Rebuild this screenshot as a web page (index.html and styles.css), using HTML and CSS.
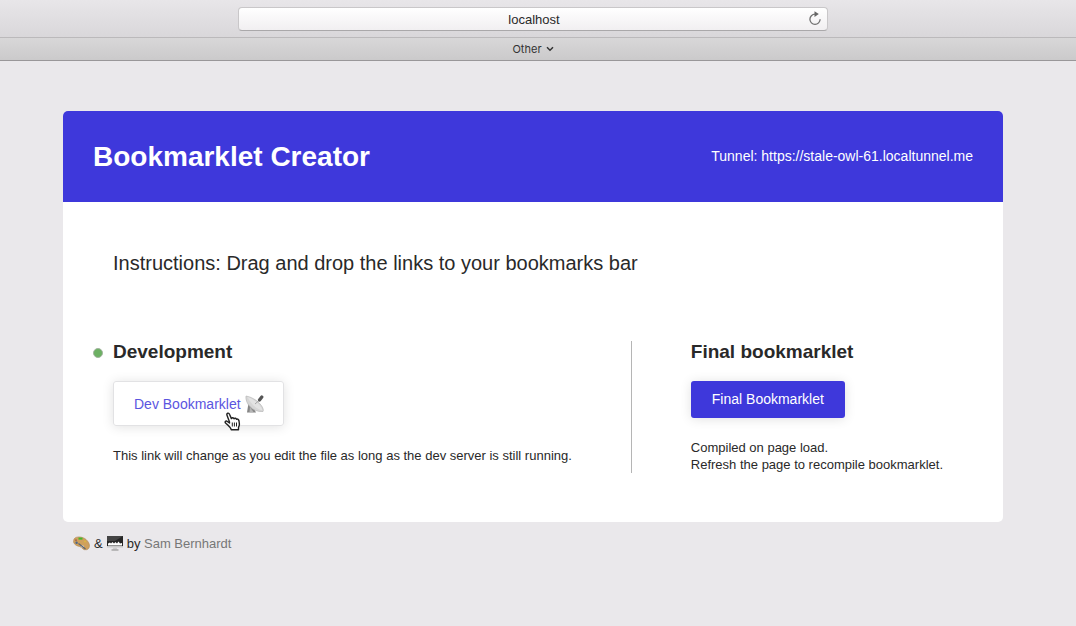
FILE: index.html
```html
<!DOCTYPE html>
<html lang="en">
<head>
<meta charset="utf-8">
<meta name="viewport" content="width=device-width, initial-scale=1">
<title>Bookmarklet Creator</title>
<link rel="stylesheet" href="styles.css">
</head>
<body>
<div class="toolbar">
  <div class="address">
    <input class="address-input" type="text" value="localhost" aria-label="Address">
    <button class="reload" type="button" aria-label="Reload">
      <svg width="14" height="16" viewBox="0 0 14 16" aria-hidden="true"><path d="M7 3.2A5.1 5.1 0 1 0 12.1 8.3" fill="none" stroke="#707070" stroke-width="1.3"/><path d="M6.5 .3 10.8 3.1 6.5 6z" fill="#666"/></svg>
    </button>
  </div>
</div>
<div class="favorites">
  <button class="folder" type="button">Other
    <svg width="8" height="6" viewBox="0 0 8 6" aria-hidden="true"><path d="M1 1.2 4 4.2 7 1.2" fill="none" stroke="#333" stroke-width="1.5"/></svg>
  </button>
</div>
<div class="page">
  <main class="card">
    <header class="banner">
      <h1 class="title">Bookmarklet Creator</h1>
      <p class="tunnel">Tunnel: https://stale-owl-61.localtunnel.me</p>
    </header>
    <div class="content">
      <p class="instructions">Instructions: Drag and drop the links to your bookmarks bar</p>
      <div class="columns">
        <section class="column column-dev">
          <h2 class="heading"><span class="status"></span>Development</h2>
          <a class="button button-dev" href="#dev">Dev Bookmarklet
            <svg class="dish" width="20" height="19" viewBox="0 0 20 19" aria-hidden="true"><path d="M3.5 8 2 17.5H11L8 12z" fill="#858585"/><path d="M5 12 4.5 17 8.5 17z" fill="#b5b5b5"/><path d="M1 1C0 8 7 17.3 18 16.5 20 13 12 3 1 1z" fill="#d6d6d6" stroke="#b8b8b8" stroke-width=".7"/><path d="M2.5 2C8 3.5 16 10 17.5 15.5 11 14 6 9 2.5 2z" fill="#e3e3e3"/><path d="M10 9 14 5.5" fill="none" stroke="#999" stroke-width=".8"/><path d="M14.5 5 16.8 2" stroke="#555" stroke-width="3.2" stroke-linecap="round"/></svg>
            <svg class="cursor" width="17" height="19" viewBox="0 0 17 19" aria-hidden="true"><path d="M5.5 10 3 3.2C2.3 1.2 4.7 .3 5.5 2.3L7.4 6.6C8 5.4 9.6 5.6 10 6.8 10.9 5.8 12.1 6.2 12.5 7.3 13.7 6.6 14.7 7.5 15 9L15.4 12.1C15.5 13.6 14.9 14.5 14.5 15.5V17.7H7.2C6.6 15.2 3.9 13.3 1.6 11 .6 10 1.6 8.6 3 9.2L5.5 11z" fill="#fff" stroke="#222" stroke-width="1.4" stroke-linejoin="round"/><path d="M8.3 10.5V14.5M10.4 10.5V14.5M12.5 10.5V14.5" stroke="#222"/></svg>
          </a>
          <p class="note">This link will change as you edit the file as long as the dev server is still running.</p>
        </section>
        <section class="column column-final">
          <h2 class="heading">Final bookmarklet</h2>
          <a class="button button-final" href="#final">Final Bookmarklet</a>
          <p class="note">Compiled on page load.<br>Refresh the page to recompile bookmarklet.</p>
        </section>
      </div>
    </div>
  </main>
  <footer class="credits">
    <svg width="17" height="15" viewBox="0 0 17 15" role="img" aria-label="Design"><path d="M1 3C3-.2 11 .2 14.5 5 17.5 8.5 17 13 13.5 13.7 10 14.6 9 11 6.5 10.5 4 10 .8 8.5.5 5.7z" fill="#cfa05c" stroke="#ad8450" stroke-width=".6"/><ellipse cx="9.4" cy="10.4" rx="1.6" ry="1" fill="#ebe9eb"/><circle cx="3" cy="4.2" r="1" fill="#a8674c"/><path d="M5.5 2.6H9.5" stroke="#42b82e" stroke-width="2"/><circle cx="12" cy="5.5" r="1" fill="#dcb840"/><circle cx="3.6" cy="6.8" r="1.2" fill="#4a668b"/><path d="M5.5 7.5 12.5 13" stroke="#5d6674" stroke-width="1.3"/></svg>
    <span>&amp;</span>
    <svg width="16" height="15" viewBox="0 0 16 15" role="img" aria-label="Code"><path d="M0 0H16V10H0z" fill="#262626"/><path d="M0 0H16L8 5H0z" fill="#444"/><path d="M1 7.5 3 6.5 4 7.5 5.5 6 7 7.5 8.5 6 10 7.5 11.5 5.5 13 7.5 15 7V9.5H1z" fill="#fff"/><path d="M0 10H16V11.5H0z" fill="#c9c9c9"/><path d="M6.5 11.5H9.5L10.5 13.5H5.5z" fill="#ccc"/><path d="M4.5 14H11.5" stroke="#888"/></svg>
    <span>by <a class="author" href="#author">Sam Bernhardt</a></span>
  </footer>
</div>
</body>
</html>
```
FILE: styles.css
```css
* { box-sizing: border-box; }

body {
  margin: 0;
  min-height: 100vh;
  background: #eae8eb;
  color: #292929;
  font-family: "Liberation Sans", Arial, sans-serif;
  font-size: 13px;
  line-height: 17px;
}

h1, h2, p { margin: 0; }
svg { flex: none; }
button { border: 0; background: none; padding: 0; font: inherit; color: inherit; }
a { color: inherit; text-decoration: none; }

.toolbar {
  display: flex;
  justify-content: center;
  padding: 7px 10px 6px 0;
  background: linear-gradient(#e8e6e9, #d9d7da);
  border-bottom: 1px solid #bbb9bb;
}

.address {
  display: flex;
  align-items: center;
  width: 590px;
  max-width: 90%;
  height: 24px;
  padding: 0 5px 0 21px;
  background: linear-gradient(#fff, #f1eff1);
  border: 1px solid #c9c7c9;
  border-bottom-color: #aaa8aa;
  border-radius: 4px;
}

.address-input {
  flex: 1;
  min-width: 0;
  border: 0;
  padding: 0;
  background: none;
  text-align: center;
  font: 13px "Liberation Sans", Arial, sans-serif;
  color: #292929;
}

.reload { display: flex; width: 14px; }

.favorites {
  display: flex;
  justify-content: center;
  padding: 3px 10px 3px 0;
  background: linear-gradient(#d8d7d8, #cbcacb);
  border-bottom: 1px solid #999799;
}

.folder {
  display: flex;
  align-items: center;
  gap: 4px;
  font-family: Inter, sans-serif;
  font-size: 11px;
  line-height: 16px;
  color: #333;
}

.page {
  width: 100%;
  max-width: 1066px;
  padding: 50px 63px;
}

.card {
  background: #fff;
  border-radius: 5px;
  overflow: hidden;
}

.banner {
  display: flex;
  align-items: center;
  justify-content: space-between;
  gap: 20px;
  padding: 30px;
  background: #3e38db;
  color: #fff;
}

.title { font-size: 28px; line-height: 31px; }
.tunnel { font-size: 14px; }

.content { padding: 50px; }
.instructions { font-size: 20px; line-height: 23px; }

.columns {
  display: flex;
  margin-top: 66px;
}

.column {
  display: flex;
  flex-direction: column;
  align-items: flex-start;
}

.column-dev { flex: 1; padding-right: 20px; }
.column-final { padding: 0 10px 0 59px; border-left: 1px solid #b5b5b5; }

.heading {
  position: relative;
  margin-bottom: 19px;
  font-size: 19px;
  line-height: 21px;
}

.status {
  position: absolute;
  top: 7px;
  left: -20px;
  width: 10px;
  height: 10px;
  border: 1px solid #a3b5a0;
  border-radius: 50%;
  background: #6cb063;
}

.button {
  position: relative;
  display: flex;
  align-items: center;
  gap: 4px;
  margin-bottom: 20px;
  padding: 10px 21px;
  border-radius: 3px;
  box-shadow: 0 1px 12px rgba(0, 0, 0, .12);
  font-size: 14px;
}

.button-dev {
  padding: 12px 18px 11px 20px;
  border: 1px solid #e2e2e4;
  line-height: 20px;
  color: #5b55df;
}

.button-final { margin-bottom: 21px; background: #3e38db; color: #fff; }

.cursor {
  position: absolute;
  left: 110px;
  top: 30px;
}

.column-dev .button { margin-bottom: 21px; }

.credits {
  display: flex;
  align-items: center;
  gap: 4px;
  padding: 13px 10px;
}

.content { padding-bottom: 49px; }

.author { color: #777; }
```
